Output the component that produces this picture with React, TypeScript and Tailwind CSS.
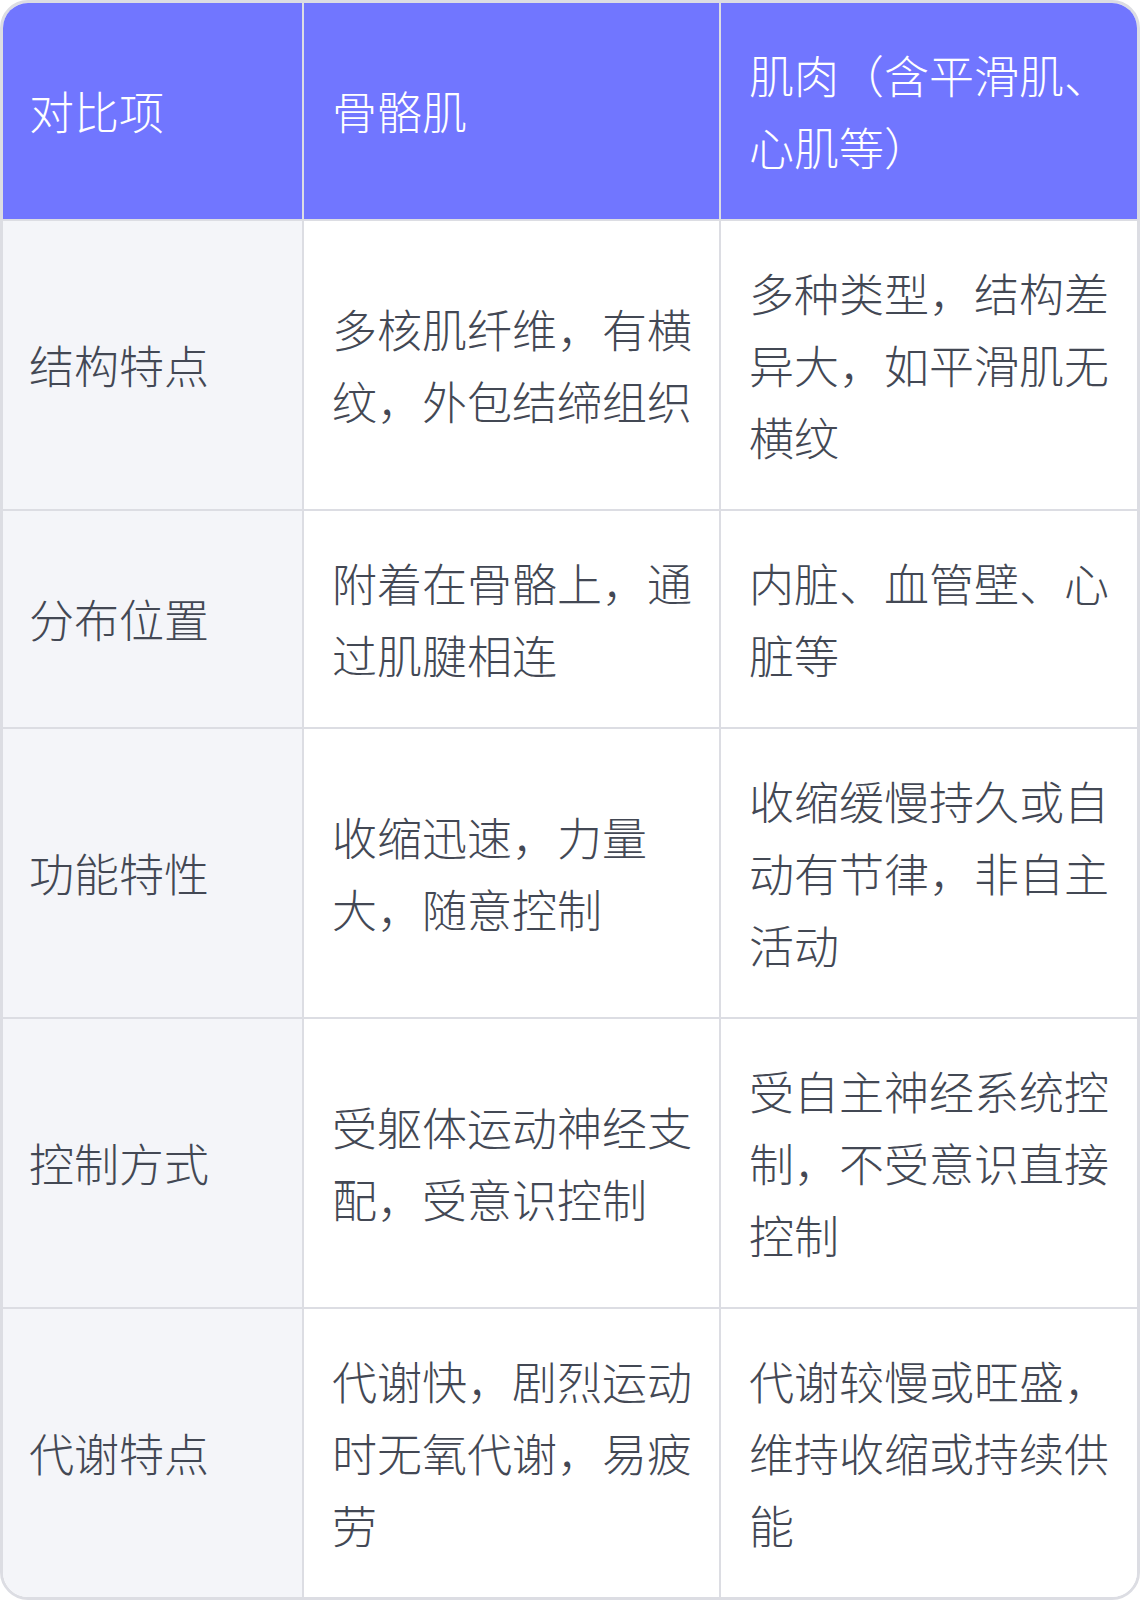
import React from 'react';

type Row = {
  label: string;
  skeletal: string;
  other: string;
};

const rows: Row[] = [
  {
    label: '结构特点',
    skeletal: '多核肌纤维，有横纹，外包结缔组织',
    other: '多种类型，结构差异大，如平滑肌无横纹',
  },
  {
    label: '分布位置',
    skeletal: '附着在骨骼上，通过肌腱相连',
    other: '内脏、血管壁、心脏等',
  },
  {
    label: '功能特性',
    skeletal: '收缩迅速，力量大，随意控制',
    other: '收缩缓慢持久或自动有节律，非自主活动',
  },
  {
    label: '控制方式',
    skeletal: '受躯体运动神经支配，受意识控制',
    other: '受自主神经系统控制，不受意识直接控制',
  },
  {
    label: '代谢特点',
    skeletal: '代谢快，剧烈运动时无氧代谢，易疲劳',
    other: '代谢较慢或旺盛，维持收缩或持续供能',
  },
];

const cell = 'flex items-center py-[36px] border-[#dcdde3]';
const first = 'px-[26px]';
const wide = 'pl-[28px] pr-[24px]';

const App = () => {
  return (
    <div className="w-[1140px] bg-white font-['Noto_Sans_CJK_SC',sans-serif] font-light text-[45px] leading-[72px]">
      <div className="border-[3px] border-[#dcdde3] rounded-[28px] overflow-hidden grid grid-cols-[301px_417px_416px]">
        <div className={`${cell} ${first} bg-[#7176ff] text-white border-r-2 border-b-2`}>对比项</div>
        <div className={`${cell} ${wide} bg-[#7176ff] text-white border-r-2 border-b-2`}>骨骼肌</div>
        <div className={`${cell} ${wide} bg-[#7176ff] text-white border-b-2`}>肌肉（含平滑肌、心肌等）</div>
        {rows.map((row, i) => {
          const last = i === rows.length - 1;
          return (
            <React.Fragment key={row.label}>
              <div className={`${cell} ${first} bg-[#f4f5f9] text-[#434854] border-r-2 ${last ? '' : 'border-b-2'}`}>
                {row.label}
              </div>
              <div className={`${cell} ${wide} bg-white text-[#434854] border-r-2 ${last ? '' : 'border-b-2'}`}>
                {row.skeletal}
              </div>
              <div className={`${cell} ${wide} bg-white text-[#434854] ${last ? '' : 'border-b-2'}`}>
                {row.other}
              </div>
            </React.Fragment>
          );
        })}
      </div>
    </div>
  );
};

export default App;
